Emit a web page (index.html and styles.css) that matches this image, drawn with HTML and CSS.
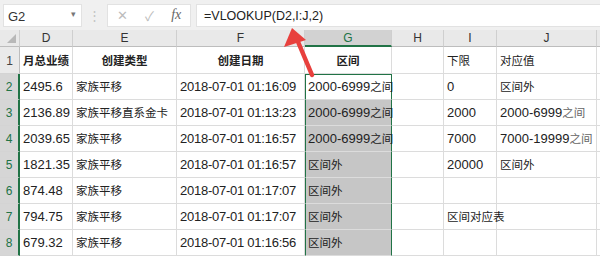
FILE: index.html
```html
<!DOCTYPE html>
<html lang="zh">
<head>
  <meta charset="UTF-8" />
  <title>VLOOKUP 区间</title>
  <link rel="stylesheet" href="styles.css">
</head>
<body>
  <div class="toolbar">
    <div class="namebox">G2<span class="drop">▾</span></div>
    <div class="dots">⋮</div>
    <div class="fxbox">
      <span class="ico">✕</span>
      <span class="ico">✓</span>
      <span class="ico fx">fx</span>
    </div>
    <div class="formula">=VLOOKUP(D2,I:J,2)</div>
  </div>

  <div class="sheet">
    <div class="hd corner"></div>
    <div class="hd">D</div>
    <div class="hd">E</div>
    <div class="hd">F</div>
    <div class="hd sel">G</div>
    <div class="hd">H</div>
    <div class="hd">I</div>
    <div class="hd">J</div>
    <div class="hd edge"></div>

    <div class="rh">1</div>
    <div class="c b ctr cjk">月总业绩</div>
    <div class="c b ctr cjk">创建类型</div>
    <div class="c b ctr cjk">创建日期</div>
    <div class="c b ctr cjk">区间</div>
    <div class="c"></div>
    <div class="c cjk">下限</div>
    <div class="c cjk">对应值</div>
    <div class="c edge"></div>

    <div class="rh on">2</div>
    <div class="c">2495.6</div>
    <div class="c cjk">家族平移</div>
    <div class="c date">2018-07-01 01:16:09</div>
    <div class="c g active">2000-6999<span class="zh">之间</span></div>
    <div class="c"></div>
    <div class="c">0</div>
    <div class="c cjk">区间外</div>
    <div class="c edge"></div>

    <div class="rh on">3</div>
    <div class="c">2136.89</div>
    <div class="c cjk">家族平移直系金卡</div>
    <div class="c date">2018-07-01 01:13:23</div>
    <div class="c g">2000-6999<span class="zh">之间</span></div>
    <div class="c"></div>
    <div class="c">2000</div>
    <div class="c">2000-6999<span class="zh light">之间</span></div>
    <div class="c edge"></div>

    <div class="rh on">4</div>
    <div class="c">2039.65</div>
    <div class="c cjk">家族平移</div>
    <div class="c date">2018-07-01 01:16:57</div>
    <div class="c g">2000-6999<span class="zh">之间</span></div>
    <div class="c"></div>
    <div class="c">7000</div>
    <div class="c">7000-19999<span class="zh light">之间</span></div>
    <div class="c edge"></div>

    <div class="rh on">5</div>
    <div class="c">1821.35</div>
    <div class="c cjk">家族平移</div>
    <div class="c date">2018-07-01 01:16:57</div>
    <div class="c g cjk">区间外</div>
    <div class="c"></div>
    <div class="c">20000</div>
    <div class="c cjk">区间外</div>
    <div class="c edge"></div>

    <div class="rh on">6</div>
    <div class="c">874.48</div>
    <div class="c cjk">家族平移</div>
    <div class="c date">2018-07-01 01:17:07</div>
    <div class="c g cjk">区间外</div>
    <div class="c"></div>
    <div class="c"></div>
    <div class="c"></div>
    <div class="c edge"></div>

    <div class="rh on">7</div>
    <div class="c">794.75</div>
    <div class="c cjk">家族平移</div>
    <div class="c date">2018-07-01 01:17:07</div>
    <div class="c g cjk">区间外</div>
    <div class="c"></div>
    <div class="c cjk over">区间对应表</div>
    <div class="c"></div>
    <div class="c edge"></div>

    <div class="rh on">8</div>
    <div class="c">679.32</div>
    <div class="c cjk">家族平移</div>
    <div class="c date">2018-07-01 01:16:56</div>
    <div class="c g cjk">区间外</div>
    <div class="c"></div>
    <div class="c"></div>
    <div class="c"></div>
    <div class="c edge"></div>
  </div>

  <!-- 红色箭头 -->
  <svg class="arrow" width="60" height="70" viewBox="0 0 60 70">
    <line x1="42" y1="60" x2="26" y2="22" stroke="#e8403d" stroke-width="4.5" stroke-linecap="round" />
    <polygon points="22,13 14,32 36,25" fill="#e8403d" />
  </svg>
</body>
</html>
```

FILE: styles.css
```css
body { margin: 0; width: 600px; height: 257px; overflow: hidden; background: #fff; font-family: "Liberation Sans", "Noto Sans CJK SC", sans-serif; color: #222; position: relative; }

.toolbar { display: flex; align-items: center; height: 30px; background: #f0f0f0; padding: 0 0 0 3px; box-sizing: border-box; }
.namebox { width: 79px; height: 23px; background: #fff; border: 1px solid #e2e2e2; box-sizing: border-box; font-size: 13px; padding: 4px 0 0 4px; position: relative; color: #333; }
.drop { position: absolute; right: 5px; top: 4px; font-size: 9px; color: #777; }
.dots { width: 25px; text-align: center; color: #c4c4c4; font-size: 13px; }
.fxbox { width: 84px; height: 23px; background: #fff; border: 1px solid #e2e2e2; box-sizing: border-box; display: flex; justify-content: space-around; align-items: center; color: #bcbcbc; font-size: 13px; }
.fx { font-family: "Liberation Serif", serif; font-style: italic; color: #666; font-size: 14px; }
.formula { flex: 1; height: 23px; margin-left: 5px; background: #fff; border: 1px solid #e2e2e2; border-right: 0; box-sizing: border-box; font-size: 12.5px; padding: 4px 0 0 7px; color: #222; }

.sheet { display: grid; grid-template-columns: 20px 53px 104px 128px 87px 52px 53px 100px 3px; grid-template-rows: 17px 27px repeat(7, 26px); }
.hd { background: #e9e9e9; border-right: 1px solid #cfcfcf; border-bottom: 1px solid #bdbdbd; box-sizing: border-box; font-size: 12px; text-align: center; line-height: 17px; color: #333; margin-top: 0; }
.hd.sel { background: #d2d2d2; color: #217346; border-bottom: 2px solid #217346; }
.corner { position: relative; }
.corner::after { content: ""; position: absolute; right: 3px; bottom: 3px; border-left: 9px solid transparent; border-bottom: 9px solid #b8b8b8; }
.hd.edge, .c.edge { border-right: 0; }

.rh { background: #eaeaea; border-right: 1px solid #bdbdbd; border-bottom: 1px solid #d4d4d4; box-sizing: border-box; font-size: 12px; color: #444; display: flex; align-items: flex-end; justify-content: center; padding-bottom: 5px; }
.rh.on { background: #d6d6d6; color: #217346; border-right: 2px solid #217346; }

.c { border-right: 1px solid #dcdcdc; border-bottom: 1px solid #dcdcdc; box-sizing: border-box; font-size: 13px; display: flex; align-items: flex-end; padding: 0 0 5px 3px; white-space: nowrap; overflow: visible; }
.cjk, .zh { font-size: 11.5px; }
.c.cjk { padding-bottom: 5px; }
.zh.light { color: #666; }
.b { font-weight: bold; }
.ctr { justify-content: center; padding-left: 0; }
.date { letter-spacing: -0.25px; padding-left: 3px; }
.over { position: relative; z-index: 1; }

.c.g { background: #c6c6c6; border-left: 1px solid #217346; border-right: 1px solid #217346; padding-left: 2px; }
.c.g.active { background: #fff; border-top: 1px solid #217346; }

.arrow { position: absolute; left: 270px; top: 15px; }
```
